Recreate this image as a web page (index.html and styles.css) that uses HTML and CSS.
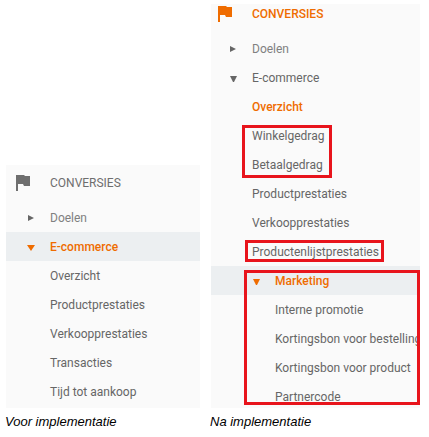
FILE: index.html
```html
<!DOCTYPE html>
<html lang="nl">
<head>
  <meta charset="UTF-8">
  <meta name="viewport" content="width=device-width, initial-scale=1.0">
  <title>Conversies voor en na implementatie</title>
  <link rel="stylesheet" href="styles.css">
</head>
<body>
  <main class="compare">
    <figure class="before">
      <nav class="panel">
        <h2 class="title">
          <svg class="flag" viewBox="0 0 14 16"><path d="M0 0H8L9 1H14V11H8L7 9H2V16H0Z"/></svg>
          CONVERSIES
        </h2>
        <ul class="menu">
          <li><a class="item light" href="#"><svg class="arrow" viewBox="0 0 8 8"><path d="M1 1L7 4L1 7Z"/></svg>Doelen</a></li>
          <li>
            <a class="item active current" href="#"><svg class="arrow" viewBox="0 0 8 8"><path d="M0 2H8L4 8Z"/></svg>E-commerce</a>
            <ul class="menu">
              <li><a class="item" href="#">Overzicht</a></li>
              <li><a class="item" href="#">Productprestaties</a></li>
              <li><a class="item" href="#">Verkoopprestaties</a></li>
              <li><a class="item" href="#">Transacties</a></li>
              <li><a class="item" href="#">Tijd tot aankoop</a></li>
            </ul>
          </li>
        </ul>
      </nav>
      <figcaption>Voor implementatie</figcaption>
    </figure>

    <figure class="after">
      <nav class="panel">
        <h2 class="title active">
          <svg class="flag" viewBox="0 0 14 16"><path d="M0 0H8L9 1H14V11H8L7 9H2V16H0Z"/></svg>
          CONVERSIES
        </h2>
        <ul class="menu">
          <li><a class="item light" href="#"><svg class="arrow" viewBox="0 0 8 8"><path d="M1 1L7 4L1 7Z"/></svg>Doelen</a></li>
          <li>
            <a class="item" href="#"><svg class="arrow" viewBox="0 0 8 8"><path d="M1 2H8L5 8H4Z"/></svg>E-commerce</a>
            <ul class="menu">
              <li><a class="item active" href="#">Overzicht</a></li>
              <li class="marked mark-behaviour">
                <ul class="menu">
                  <li><a class="item" href="#">Winkelgedrag</a></li>
                  <li><a class="item" href="#">Betaalgedrag</a></li>
                </ul>
              </li>
              <li><a class="item" href="#">Productprestaties</a></li>
              <li><a class="item" href="#">Verkoopprestaties</a></li>
              <li class="marked mark-list"><a class="item" href="#">Productenlijstprestaties</a></li>
              <li class="marked mark-marketing">
                <a class="item sub active current" href="#"><svg class="arrow" viewBox="0 0 8 8"><path d="M1 2H8L5 8H4Z"/></svg>Marketing</a>
                <ul class="menu">
                  <li><a class="item sub" href="#">Interne promotie</a></li>
                  <li><a class="item sub" href="#">Kortingsbon voor bestelling</a></li>
                  <li><a class="item sub" href="#">Kortingsbon voor product</a></li>
                  <li><a class="item sub" href="#">Partnercode</a></li>
                </ul>
              </li>
            </ul>
          </li>
        </ul>
      </nav>
      <figcaption>Na implementatie</figcaption>
    </figure>
  </main>
</body>
</html>
```
FILE: styles.css
```css
body {
  margin: 0;
  background-color: #fff;
  color: #000;
  font-family: Roboto, Arial, sans-serif;
}

.compare {
  display: flex;
  align-items: flex-end;
  gap: 11px;
  padding: 4px 9px 0 6px;
}

figure {
  margin: 0;
}

.before {
  flex: 194;
  min-width: 0;
}

.after {
  flex: 209;
  min-width: 0;
}

.panel {
  background-color: #fafafa;
  color: #6e6e6e;
}

.before .panel {
  padding: 8px 0 2px;
}

.after .panel {
  overflow: hidden;
}

.title {
  display: flex;
  align-items: center;
  margin: 0;
  padding: 0 0 10px 10px;
  font-size: 12px;
  font-weight: 400;
  line-height: 20px;
}

.after .title {
  padding-left: 7px;
  font-weight: 500;
}

.flag {
  width: 14px;
  height: 16px;
  margin-right: 20px;
  fill: currentColor;
}

.menu {
  list-style: none;
  margin: 0;
  padding: 0;
}

.item {
  display: block;
  padding: 3px 0 1px 44px;
  color: #666;
  font-size: 12px;
  font-weight: 400;
  line-height: 25px;
  text-decoration: none;
  white-space: nowrap;
}

.after .item {
  padding-left: 41px;
}

.after .sub {
  padding-left: 64px;
}

.after .mark-marketing li:last-child .item {
  margin-bottom: -3px;
}

.item.light {
  color: #808080;
}

.active,
.item.active {
  color: #ef6c00;
  font-weight: 500;
}

.current {
  background-color: #eceff1;
}

.arrow {
  width: 8px;
  height: 8px;
  margin-left: -23px;
  margin-right: 15px;
  fill: #666;
}

.active .arrow {
  fill: currentColor;
}

/* red outlines around the new reports */
.marked {
  position: relative;
}

.marked::after {
  content: "";
  position: absolute;
  border: 3px solid #e8141c;
  pointer-events: none;
}

.mark-behaviour::after {
  top: 4px;
  bottom: 1px;
  left: 31px;
  width: 84px;
}

.mark-list::after {
  top: 3px;
  bottom: 4px;
  left: 34px;
  width: 133px;
}

.mark-marketing::after {
  top: 4px;
  bottom: 6px;
  left: 33px;
  right: 0;
}

figcaption {
  margin-left: -1px;
  padding-top: 5px;
  font-family: "Liberation Sans", Arial, sans-serif;
  font-size: 13px;
  font-style: italic;
  line-height: 17px;
}
```
